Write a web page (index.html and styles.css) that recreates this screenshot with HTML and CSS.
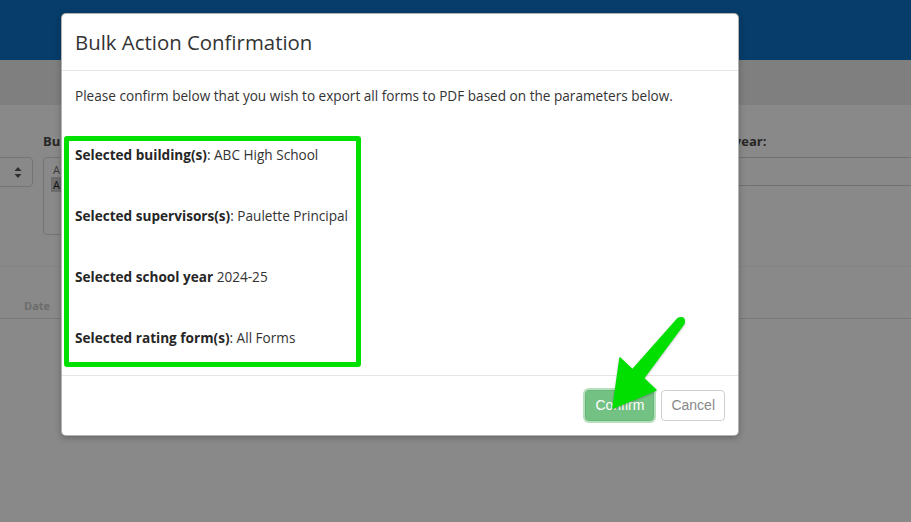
FILE: index.html
```html
<!DOCTYPE html>
<html lang="en">
<head>
<meta charset="utf-8">
<title>Bulk Action Confirmation</title>
<link rel="stylesheet" href="styles.css">
</head>
<body>
<div class="page">
  <header class="topbar"></header>
  <div class="subbar"></div>
  <section class="filters">
    <div class="field field-first">
      <div class="label">&nbsp;</div>
      <div class="select">
        <svg class="updown" width="8" height="11" viewBox="0 0 8 11"><path d="M4 0 L7.5 4 H0.5 Z M4 11 L7.5 7 H0.5 Z" fill="#2e2e2e"/></svg>
      </div>
    </div>
    <div class="field field-building">
      <div class="label">Bu</div>
      <div class="multiselect">
        <div class="opt">A</div>
        <div class="opt opt-sel">A</div>
      </div>
    </div>
    <div class="spacer"></div>
    <div class="field field-year">
      <div class="label">School year:</div>
      <div class="input"></div>
    </div>
  </section>
  <div class="table-head">
    <span class="th">Date</span>
  </div>
</div>

<div class="modal" role="dialog">
  <div class="modal-header">
    <h4 class="modal-title">Bulk Action Confirmation</h4>
  </div>
  <div class="modal-body">
    <p class="intro">Please confirm below that you wish to export all forms to PDF based on the parameters below.</p>
    <div class="params">
      <p><b>Selected building(s)</b>: ABC High School</p>
      <p><b>Selected supervisors(s)</b>: Paulette Principal</p>
      <p><b>Selected school year</b> 2024-25</p>
      <p><b>Selected rating form(s)</b>: All Forms</p>
    </div>
  </div>
  <div class="modal-footer">
    <button class="btn btn-confirm">Confirm</button>
    <button class="btn btn-cancel">Cancel</button>
  </div>
</div>

<svg class="arrow" width="86" height="102" viewBox="0 0 86 102">
  <polygon points="73,6.5 27.5,57.7 15,46 8,96 51,78 38.5,66.3 79,11.5" fill="#00df00" stroke="#00df00" stroke-width="1.5" stroke-linejoin="round"/>
  <circle cx="76" cy="9" r="4" fill="#00df00"/>
</svg>
</body>
</html>
```

FILE: styles.css
```css
* { box-sizing: border-box; }

html, body {
  margin: 0;
  padding: 0;
  width: 911px;
  height: 522px;
  overflow: hidden;
  background: #898989;
  font-family: "Open Sans", "Liberation Sans", sans-serif;
}

.page {
  width: 911px;
  height: 522px;
  overflow: hidden;
  background: #898989;
}

.topbar {
  height: 60px;
  background: #073d6a;
}

.subbar {
  height: 45px;
  background: #7f7f7f;
}

.filters {
  display: flex;
  align-items: flex-start;
  height: 162px;
  padding-top: 27px;
  border-bottom: 1px solid #838383;
}

.label {
  font-size: 13px;
  font-weight: 700;
  line-height: 18px;
  color: #262626;
  height: 18px;
  white-space: nowrap;
  margin-bottom: 7px;
}

.field-first {
  margin-left: -120px;
  width: 153px;
  flex: none;
}

.select {
  height: 30px;
  border: 1px solid #747474;
  border-radius: 4px;
  position: relative;
  display: flex;
  align-items: center;
  justify-content: flex-end;
  padding-right: 10px;
}

.updown { display: block; }

.field-building {
  margin-left: 10px;
  width: 30px;
  flex: none;
}

.multiselect {
  height: 78px;
  border: 1px solid #747474;
  border-radius: 4px;
  padding: 4px 0 0 7px;
  font-size: 11px;
  line-height: 15px;
  color: #3a3a3a;
}

.opt {
  padding-left: 2px;
  white-space: nowrap;
}

.opt-sel {
  background: #6e6e6e;
  color: #111;
}

.spacer { flex: 1; }

.field-year {
  width: 230px;
  flex: none;
  margin-right: -7px;
}

.input {
  height: 29px;
  border: 1px solid #727272;
  border-radius: 4px;
}

.table-head {
  height: 52px;
  border-bottom: 1px solid #797979;
  padding: 26px 0 0 24px;
}

.th {
  font-size: 11px;
  font-weight: 700;
  color: #6c6c6c;
  line-height: 14px;
}

/* Modal */
.modal {
  position: absolute;
  left: 61px;
  top: 13px;
  width: 678px;
  background: #fff;
  border: 1px solid rgba(0, 0, 0, 0.3);
  border-radius: 5px;
  box-shadow: 0 2px 6px rgba(0, 0, 0, 0.25);
  color: #333;
}

.modal-header {
  padding: 15px 13px 15px 13px;
  border-bottom: 1px solid #e5e5e5;
}

.modal-title {
  margin: 0;
  font-size: 20.4px;
  font-weight: 400;
  line-height: 26px;
  color: #333;
}

.modal-body {
  padding: 15px 13px 8px 13px;
}

.intro {
  margin: 0 0 30px 0;
  font-size: 13.6px;
  line-height: 20px;
  white-space: nowrap;
}

.params {
  margin-left: -11px;
  width: 297px;
  border: 5px solid #00e000;
  border-radius: 3px;
  padding: 4px 0 14px 6px;
  display: flex;
  flex-direction: column;
  gap: 41px;
}

.params p {
  margin: 0;
  font-size: 13.6px;
  line-height: 20px;
  white-space: nowrap;
  color: #333;
}

.params b { font-weight: 700; color: #262626; }

.modal-footer {
  border-top: 1px solid #e5e5e5;
  padding: 14px 13px 14px 13px;
  display: flex;
  justify-content: flex-end;
  gap: 7px;
}

.btn {
  font-family: "Liberation Sans", Arial, sans-serif;
  font-size: 14px;
  height: 31px;
  padding: 0 10px;
  border-radius: 4px;
  line-height: 29px;
}

.btn-confirm {
  background: #74c283;
  border: 1px solid #6ab878;
  color: #fff;
  box-shadow: 0 0 0 2px #b6e0bd;
  padding: 0 9px;
}

.btn-cancel {
  background: #fff;
  border: 1px solid #cfcfcf;
  color: #888;
  padding: 0 9px;
}

.arrow {
  position: absolute;
  left: 605px;
  top: 312px;
  filter: drop-shadow(0 1px 1px rgba(0, 0, 0, 0.25));
}
```
